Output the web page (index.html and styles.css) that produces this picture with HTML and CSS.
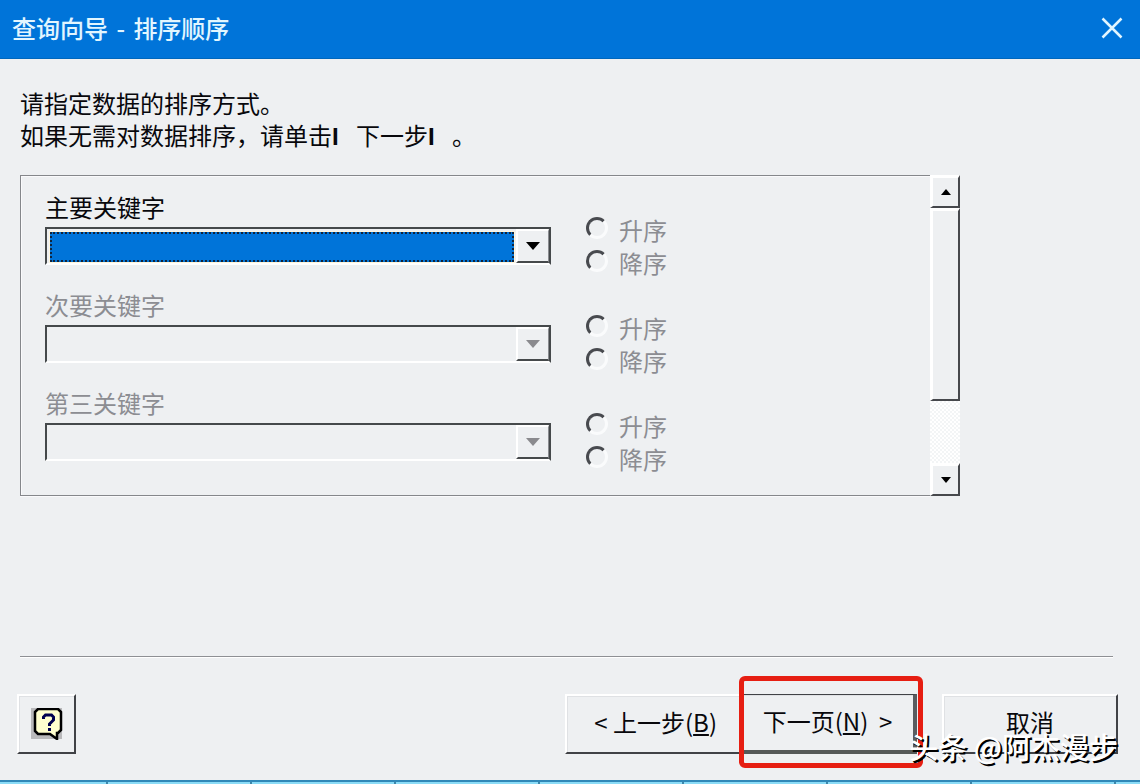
FILE: index.html
```html
<!DOCTYPE html>
<html lang="zh-CN">
<head>
<meta charset="utf-8">
<title>查询向导 - 排序顺序</title>
<link rel="stylesheet" href="styles.css">
</head>
<body>
<div class="dialog">
  <header class="titlebar">
    <h1 class="title">查询向导<span class="dash"> - </span>排序顺序</h1>
    <button class="close" type="button" aria-label="关闭">
      <svg width="22" height="22" viewBox="0 0 22 22"><path d="M1.5 1.5 20.5 20.5M20.5 1.5 1.5 20.5" fill="none" stroke="currentColor" stroke-width="2.5"/></svg>
    </button>
  </header>

  <main class="content">
    <p class="intro">请指定数据的排序方式。<br>如果无需对数据排序，请单击<b class="bar">I</b>下一步<b class="bar">I</b>。</p>

    <div class="sort-panel">
      <div class="sort-list">
        <section class="sort-row">
          <div class="field">
            <label class="label label-active" for="key1">主要关键字</label>
            <div class="combo combo-active">
              <select id="key1" class="combo-value"><option></option></select>
              <span class="combo-arrow"><svg width="14" height="8" viewBox="0 0 14 8"><path d="M0 0h14L7 8z" fill="currentColor"/></svg></span>
            </div>
          </div>
          <div class="orders">
            <label class="order"><input class="radio" type="radio" name="order1" disabled>升序</label>
            <label class="order"><input class="radio" type="radio" name="order1" disabled>降序</label>
          </div>
        </section>
        <section class="sort-row">
          <div class="field">
            <label class="label" for="key2">次要关键字</label>
            <div class="combo">
              <select id="key2" class="combo-value" disabled><option></option></select>
              <span class="combo-arrow"><svg width="14" height="8" viewBox="0 0 14 8"><path d="M0 0h14L7 8z" fill="currentColor"/></svg></span>
            </div>
          </div>
          <div class="orders">
            <label class="order"><input class="radio" type="radio" name="order2" disabled>升序</label>
            <label class="order"><input class="radio" type="radio" name="order2" disabled>降序</label>
          </div>
        </section>
        <section class="sort-row">
          <div class="field">
            <label class="label" for="key3">第三关键字</label>
            <div class="combo">
              <select id="key3" class="combo-value" disabled><option></option></select>
              <span class="combo-arrow"><svg width="14" height="8" viewBox="0 0 14 8"><path d="M0 0h14L7 8z" fill="currentColor"/></svg></span>
            </div>
          </div>
          <div class="orders">
            <label class="order"><input class="radio" type="radio" name="order3" disabled>升序</label>
            <label class="order"><input class="radio" type="radio" name="order3" disabled>降序</label>
          </div>
        </section>
      </div>
      <div class="scrollbar">
        <button class="scroll-button" type="button" aria-label="向上滚动"><svg width="10" height="6" viewBox="0 0 10 6"><path d="M0 6h10L5 0z"/></svg></button>
        <div class="scroll-thumb"></div>
        <div class="scroll-track"></div>
        <button class="scroll-button" type="button" aria-label="向下滚动"><svg width="10" height="6" viewBox="0 0 10 6"><path d="M0 0h10L5 6z"/></svg></button>
      </div>
    </div>
  </main>

  <footer class="footer">
    <button class="button help" type="button" aria-label="帮助">
      <svg width="32" height="32" viewBox="0 0 32 32">
        <path d="M0 0h31v31H0z" fill="#b9b9bb"/>
        <path d="M7 1h20l3 3v18l-3 3h-1v6l-7-5H7l-3-3V4z" fill="#ffffcf" stroke="#000" stroke-width="2.5"/>
        <path d="M12.500 11V9l2-2h6l2 2v3l-4 4v2" fill="none" stroke="#000050" stroke-width="3"/>
        <path d="M17 20h3v3h-3z" fill="#000050"/>
      </svg>
    </button>
    <div class="steps">
      <button class="button step" type="button"><span class="chevron">&lt;</span>上一步(<u>B</u>)</button>
      <div class="highlight">
        <button class="button step step-default" type="button">下一页(<u>N</u>)<span class="chevron">&gt;</span></button>
      </div>
    </div>
    <div class="cancel-area">
      <button class="button step" type="button">取消</button>
      <span class="watermark">头条 @阿杰漫步</span>
    </div>
  </footer>
  <div class="edge"></div>
</div>
</body>
</html>
```
FILE: styles.css
```css
* {
  box-sizing: border-box;
}

body {
  margin: 0;
  background: #eef0f2;
  color: #08080c;
  font: 24px/32px "Noto Sans CJK SC", sans-serif;
}

button,
select,
input {
  margin: 0;
  padding: 0;
  border: 0;
  border-radius: 0;
  background: none;
  color: inherit;
  font: inherit;
}

svg {
  display: block;
}

.dialog {
  display: flex;
  flex-direction: column;
  min-height: 100vh;
}

.titlebar {
  display: flex;
  align-items: center;
  justify-content: space-between;
  height: 59px;
  padding: 0 17px 2px 12px;
  background: #0074d9;
  border-bottom: 1px solid #0067bd;
  color: #e2f6ff;
}

.title {
  margin: 0;
  font-size: 24px;
  font-weight: 500;
}

.dash {
  padding: 0 3px;
}

.content {
  flex: 1;
  margin: 0 27px 0 20px;
  padding-top: 28px;
  border-bottom: 1px solid #8e9094;
  box-shadow: 0 1px #fff;
}

.intro {
  margin: 0;
}

.bar {
  display: inline-block;
  width: 24px;
  font-family: "Liberation Sans", sans-serif;
}

.sort-panel {
  display: flex;
  max-width: 940px;
  margin-top: 22px;
}

.sort-list {
  display: grid;
  flex: 1;
  gap: 24px;
  padding: 15px 0 34px 24px;
  border: 1px solid #85878b;
  border-right: 0;
  box-shadow: inset 1px 1px #fafafc, 0 1px #fafafc;
}

.sort-row {
  display: flex;
  align-items: flex-start;
  gap: 35px;
  height: 74px;
}

.field {
  flex: 0 1 506px;
}

.label {
  display: block;
  height: 36px;
  color: #8c8d92;
}

.label-active {
  color: #08080c;
}

.combo {
  display: flex;
  height: 38px;
  border: 2px solid #fff;
  border-top-color: #45494b;
  border-left-color: #45494b;
  border-right-color: #45494b;
}

.combo-value {
  flex: 1;
  min-width: 0;
  appearance: none;
  opacity: 1;
}

.combo-active .combo-value {
  margin: 3px 2px 1px 3px;
  border: 2px dotted #10243c;
  background: #0074d9;
  outline: 1px solid #fff5dc;
}

.combo-arrow {
  display: grid;
  place-items: center;
  width: 33px;
  border: 2px solid #fff;
  border-right: 1px solid #8a8c90;
  border-bottom: 2px solid #45494b;
  color: #8a8a8e;
}

.combo-active .combo-arrow {
  color: #000;
}

.orders {
  padding-top: 22px;
}

.order {
  display: flex;
  align-items: center;
  gap: 11px;
  height: 33px;
  color: #8c8d92;
}

.radio {
  width: 22px;
  height: 22px;
  margin-bottom: 4px;
  appearance: none;
  border: 3px solid #fafbfc;
  border-top-color: #484a4f;
  border-left-color: #484a4f;
  border-radius: 50%;
}

.scrollbar {
  display: flex;
  flex-direction: column;
  width: 30px;
}

.scroll-button,
.scroll-thumb {
  border: 3px solid #fff;
  border-right: 2px solid #46484c;
  border-bottom: 2px solid #46484c;
}

.scroll-button {
  display: grid;
  place-items: center;
  height: 33px;
}

.scroll-thumb {
  flex: 3;
}

.scroll-track {
  flex: 1;
  background: repeating-conic-gradient(#f3f5f6 0 25%, #fff 0 50%) 0 0 / 4px 4px;
}

.footer {
  display: flex;
  align-items: center;
  gap: 25px;
  padding: 37px 22px 26px 17px;
}

.button {
  height: 60px;
  border: 2px solid #fff;
  border-right: 2px solid #404246;
  border-bottom: 2px solid #404246;
  box-shadow: inset 1px 1px #dfe1e4;
}

.help {
  display: grid;
  place-items: center;
  width: 59px;
}

.steps {
  display: flex;
  margin-left: auto;
}

.step {
  width: 176px;
  padding-bottom: 4px;
  white-space: pre;
}

.chevron {
  display: inline-block;
  width: 24px;
}

.step-default {
  border: 1px solid #404246;
  border-right: 4px solid #5a5c60;
  border-bottom: 4px solid #555958;
}

.step-default .chevron {
  text-align: right;
}

.highlight,
.cancel-area {
  position: relative;
}

.highlight::after {
  position: absolute;
  inset: -18px -6px -14px -2px;
  border: 5px solid #e61e12;
  border-radius: 6px;
  content: "";
  pointer-events: none;
}

.watermark {
  position: absolute;
  right: 0;
  bottom: -12px;
  color: #fff;
  font-size: 29px;
  font-weight: 500;
  line-height: 40px;
  text-shadow: 2px 2px #000;
  white-space: nowrap;
}

.edge {
  height: 4px;
  border-top: 2px solid #3088b8;
  background: repeating-linear-gradient(90deg, #8bdcf7 0 106px, #3c87ab 106px 108px, #8bdcf7 108px 144px);
}
```
